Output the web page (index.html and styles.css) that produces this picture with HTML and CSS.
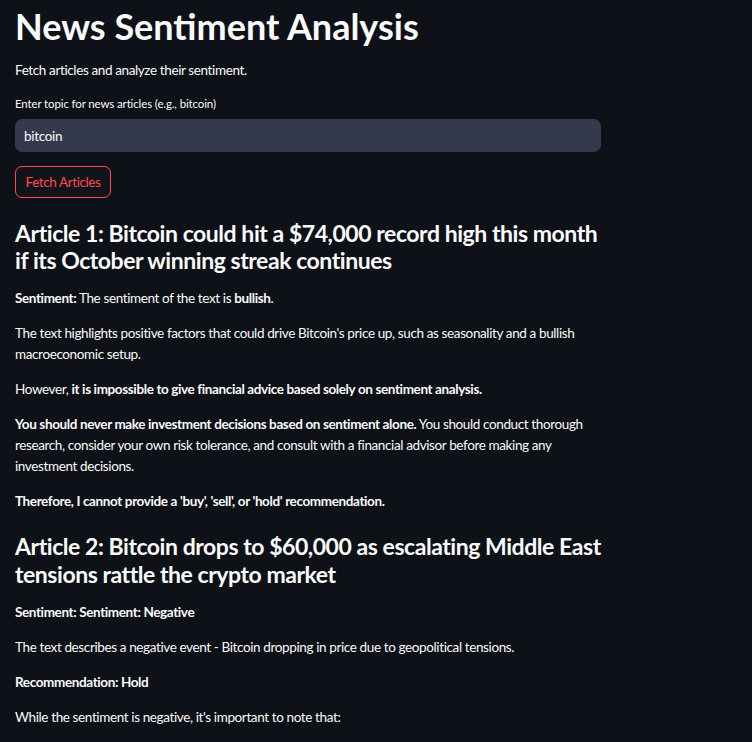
FILE: index.html
```html
<!DOCTYPE html>
<html lang="en">
<head>
<meta charset="utf-8">
<title>News Sentiment Analysis</title>
<link rel="stylesheet" href="styles.css">
</head>
<body>
<main class="app">
  <h1 class="title">News Sentiment Analysis</h1>
  <p class="intro">Fetch articles and analyze their sentiment.</p>
  <label class="field-label" for="topic">Enter topic for news articles (e.g., bitcoin)</label>
  <div class="input-wrap"><input id="topic" class="text-input" type="text" value="bitcoin"></div>
  <button class="btn" type="button">Fetch Articles</button>

  <section class="article">
    <h3 class="article-title">Article 1: Bitcoin could hit a $74,000 record high this month if its October winning streak continues</h3>
    <p><strong>Sentiment:</strong> The sentiment of the text is <strong>bullish</strong>.</p>
    <p>The text highlights positive factors that could drive Bitcoin's price up, such as seasonality and a bullish macroeconomic setup.</p>
    <p>However, <strong>it is impossible to give financial advice based solely on sentiment analysis.</strong></p>
    <p><strong>You should never make investment decisions based on sentiment alone.</strong> You should conduct thorough research, consider your own risk tolerance, and consult with a financial advisor before making any investment decisions.</p>
    <p><strong>Therefore, I cannot provide a 'buy', 'sell', or 'hold' recommendation.</strong></p>
  </section>

  <section class="article">
    <h3 class="article-title">Article 2: Bitcoin drops to $60,000 as escalating Middle East tensions rattle the crypto market</h3>
    <p><strong>Sentiment: Sentiment: Negative</strong></p>
    <p>The text describes a negative event - Bitcoin dropping in price due to geopolitical tensions.</p>
    <p><strong>Recommendation: Hold</strong></p>
    <p>While the sentiment is negative, it's important to note that:</p>
  </section>
</main>
</body>
</html>
```
FILE: styles.css
```css
html, body {
  margin: 0;
  padding: 0;
  background: #0e1117;
}
body {
  color: #fafafa;
  font-family: Lato, "Noto Sans", sans-serif;
  font-size: 13.5px;
  letter-spacing: -0.38px;
  line-height: 21px;
  overflow: hidden;
  height: 742px;
}
.app {
  width: 586px;
  padding: 2.5px 0 0 15px;
}
.title {
  margin: 0 0 11px;
  font-size: 36px;
  letter-spacing: 0;
  line-height: 46px;
  font-weight: 700;
}
.intro {
  margin: 0;
}
.field-label {
  display: block;
  margin-top: 14.5px;
  font-size: 11.5px;
  letter-spacing: -0.13px;
  line-height: 18px;
}
.input-wrap {
  margin-top: 6px;
}
.text-input {
  box-sizing: border-box;
  width: 100%;
  height: 33px;
  border: 1px solid #343a4c;
  border-radius: 7px;
  background: #343a4c;
  color: #fafafa;
  font-family: inherit;
  font-size: 13.5px;
  letter-spacing: -0.3px;
  padding: 0 8px;
  outline: none;
}
.btn {
  display: block;
  margin-top: 14px;
  height: 32px;
  width: 96px;
  box-sizing: border-box;
  border: 1px solid #ff4b4b;
  border-radius: 7px;
  background: #11141b;
  color: #ff4b4b;
  font-family: inherit;
  font-size: 13.5px;
  letter-spacing: -0.4px;
  padding: 0;
}
.article-title {
  margin: 21.8px 0 13.8px;
  font-size: 23px;
  letter-spacing: -0.45px;
  line-height: 27.3px;
  font-weight: 700;
}
.article + .article .article-title {
  margin-top: 21.3px;
}
.article p {
  margin: 0 0 14px;
}
strong {
  font-weight: 700;
}
```
